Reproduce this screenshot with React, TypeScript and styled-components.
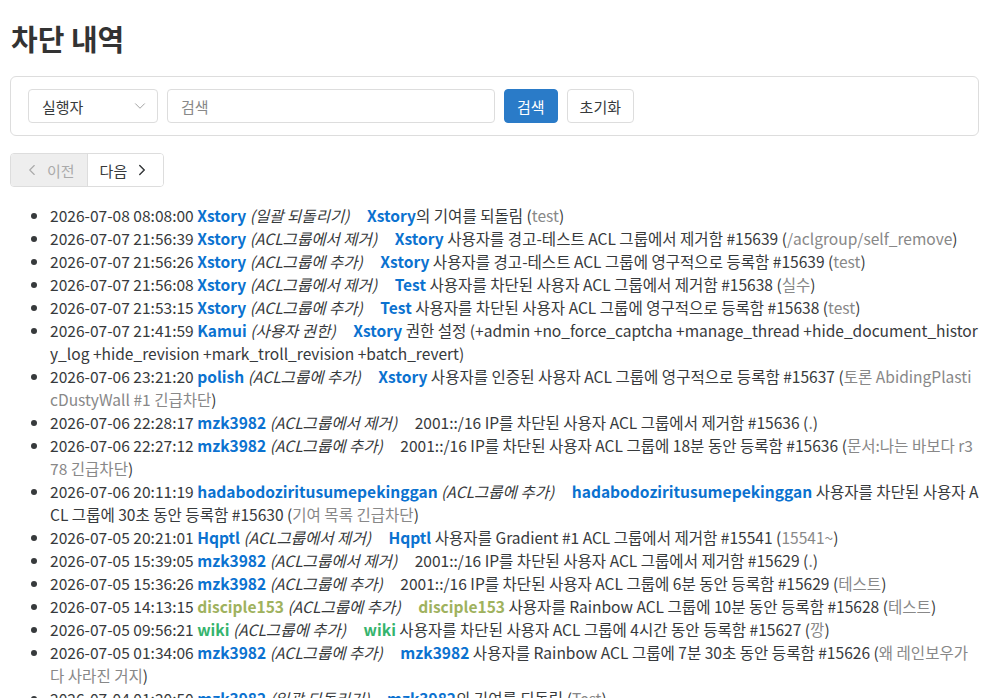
import React from "react";
import styled, { createGlobalStyle } from "styled-components";
import { ChevronDown, ChevronLeft, ChevronRight } from "lucide-react";

const GlobalStyle = createGlobalStyle`
  body {
    margin: 0;
    background: #fff;
    color: #373a3c;
    font-family: "Noto Sans CJK KR", "Noto Sans", sans-serif;
  }
`;

const Page = styled.div`
  padding: 16px 21px 0 10px;
`;

const Title = styled.h1`
  margin: 0 0 0 1px;
  font-size: 29px;
  font-weight: 700;
  line-height: 44px;
  color: #333;
`;

const SearchCard = styled.form`
  margin-top: 16px;
  border: 1px solid #ddd;
  border-radius: 6px;
  padding: 12px 17px;
  display: flex;
  align-items: center;
  gap: 9px;
`;

const SelectBox = styled.div`
  width: 130px;
  height: 34px;
  box-sizing: border-box;
  border: 1px solid #ddd;
  border-radius: 4px;
  display: flex;
  align-items: center;
  justify-content: space-between;
  padding: 0 8px 0 13px;
  font-size: 15px;
  color: #373a3c;
`;

const SearchInput = styled.div`
  width: 328px;
  height: 34px;
  box-sizing: border-box;
  border: 1px solid #ddd;
  border-radius: 4px;
  display: flex;
  align-items: center;
  padding: 0 13px;
  font-size: 15px;
  color: #888;
`;

const Button = styled.button<{ primary?: boolean }>`
  height: 34px;
  padding: 0 12px;
  border-radius: 4px;
  font-family: inherit;
  font-size: 15px;
  border: 1px solid ${({ primary }) => (primary ? "#2a7bc8" : "#ddd")};
  background: ${({ primary }) => (primary ? "#2a7bc8" : "#fff")};
  color: ${({ primary }) => (primary ? "#fff" : "#373a3c")};
`;

const Pager = styled.div`
  margin-top: 17px;
  display: inline-flex;
  border: 1px solid #ddd;
  border-radius: 4px;
  overflow: hidden;
`;

const PageLink = styled.span<{ disabled?: boolean }>`
  height: 32px;
  display: flex;
  align-items: center;
  gap: 6px;
  padding: 0 12px;
  font-size: 15px;
  background: ${({ disabled }) => (disabled ? "#eee" : "#fff")};
  color: ${({ disabled }) => (disabled ? "#aaa" : "#373a3c")};
  & + & {
    border-left: 1px solid #ddd;
  }
`;

const LogList = styled.ul`
  margin: 17px 0 0;
  padding-left: 40px;
  font-size: 15.55px;
  line-height: 23px;
  word-break: break-all;
`;

const UserLink = styled.a<{ tone?: string }>`
  font-weight: 700;
  text-decoration: none;
  color: ${({ tone }) =>
    tone === "olive" ? "#9fb25e" : tone === "green" ? "#35b46d" : "#0b72d0"};
`;

const Kind = styled.i`
  margin-right: 14px;
`;

const Reason = styled.span`
  color: #888;
`;

type User = { name: string; tone?: string };

type LogItem = {
  date: string;
  actor: User;
  kind: string;
  target?: User;
  text: string;
  reason: string;
};

const xstory: User = { name: "Xstory" };
const mzk: User = { name: "mzk3982" };

const logs: LogItem[] = [
  { date: "2026-07-08 08:08:00", actor: xstory, kind: "일괄 되돌리기", target: xstory, text: "의 기여를 되돌림", reason: "test" },
  { date: "2026-07-07 21:56:39", actor: xstory, kind: "ACL그룹에서 제거", target: xstory, text: " 사용자를 경고-테스트 ACL 그룹에서 제거함 #15639", reason: "/aclgroup/self_remove" },
  { date: "2026-07-07 21:56:26", actor: xstory, kind: "ACL그룹에 추가", target: xstory, text: " 사용자를 경고-테스트 ACL 그룹에 영구적으로 등록함 #15639", reason: "test" },
  { date: "2026-07-07 21:56:08", actor: xstory, kind: "ACL그룹에서 제거", target: { name: "Test" }, text: " 사용자를 차단된 사용자 ACL 그룹에서 제거함 #15638", reason: "실수" },
  { date: "2026-07-07 21:53:15", actor: xstory, kind: "ACL그룹에 추가", target: { name: "Test" }, text: " 사용자를 차단된 사용자 ACL 그룹에 영구적으로 등록함 #15638", reason: "test" },
  { date: "2026-07-07 21:41:59", actor: { name: "Kamui" }, kind: "사용자 권한", target: xstory, text: " 권한 설정 (+admin +no_force_captcha +manage_thread +hide_document_history_log +hide_revision +mark_troll_revision +batch_revert)", reason: "" },
  { date: "2026-07-06 23:21:20", actor: { name: "polish" }, kind: "ACL그룹에 추가", target: xstory, text: " 사용자를 인증된 사용자 ACL 그룹에 영구적으로 등록함 #15637", reason: "토론 AbidingPlasticDustyWall #1 긴급차단" },
  { date: "2026-07-06 22:28:17", actor: mzk, kind: "ACL그룹에서 제거", text: "2001::/16 IP를 차단된 사용자 ACL 그룹에서 제거함 #15636", reason: "." },
  { date: "2026-07-06 22:27:12", actor: mzk, kind: "ACL그룹에 추가", text: "2001::/16 IP를 차단된 사용자 ACL 그룹에 18분 동안 등록함 #15636", reason: "문서:나는 바보다 r378 긴급차단" },
  { date: "2026-07-06 20:11:19", actor: { name: "hadabodoziritusumepekinggan" }, kind: "ACL그룹에 추가", target: { name: "hadabodoziritusumepekinggan" }, text: " 사용자를 차단된 사용자 ACL 그룹에 30초 동안 등록함 #15630", reason: "기여 목록 긴급차단" },
  { date: "2026-07-05 20:21:01", actor: { name: "Hqptl" }, kind: "ACL그룹에서 제거", target: { name: "Hqptl" }, text: " 사용자를 Gradient #1 ACL 그룹에서 제거함 #15541", reason: "15541~" },
  { date: "2026-07-05 15:39:05", actor: mzk, kind: "ACL그룹에서 제거", text: "2001::/16 IP를 차단된 사용자 ACL 그룹에서 제거함 #15629", reason: "." },
  { date: "2026-07-05 15:36:26", actor: mzk, kind: "ACL그룹에 추가", text: "2001::/16 IP를 차단된 사용자 ACL 그룹에 6분 동안 등록함 #15629", reason: "테스트" },
  { date: "2026-07-05 14:13:15", actor: { name: "disciple153", tone: "olive" }, kind: "ACL그룹에 추가", target: { name: "disciple153", tone: "olive" }, text: " 사용자를 Rainbow ACL 그룹에 10분 동안 등록함 #15628", reason: "테스트" },
  { date: "2026-07-05 09:56:21", actor: { name: "wiki", tone: "green" }, kind: "ACL그룹에 추가", target: { name: "wiki", tone: "green" }, text: " 사용자를 차단된 사용자 ACL 그룹에 4시간 동안 등록함 #15627", reason: "깡" },
  { date: "2026-07-05 01:34:06", actor: mzk, kind: "ACL그룹에 추가", target: mzk, text: " 사용자를 Rainbow ACL 그룹에 7분 30초 동안 등록함 #15626", reason: "왜 레인보우가 다 사라진 거지" },
  { date: "2026-07-04 01:20:50", actor: mzk, kind: "일괄 되돌리기", target: mzk, text: "의 기여를 되돌림", reason: "Test" },
];

export default function App() {
  return (
    <>
      <GlobalStyle />
      <Page>
        <Title>차단 내역</Title>
        <SearchCard>
          <SelectBox>
            실행자
            <ChevronDown size={18} strokeWidth={1.2} color="#999" />
          </SelectBox>
          <SearchInput>검색</SearchInput>
          <Button primary type="button">
            검색
          </Button>
          <Button type="button">초기화</Button>
        </SearchCard>
        <Pager>
          <PageLink disabled>
            <ChevronLeft size={18} strokeWidth={1.5} />
            이전
          </PageLink>
          <PageLink>
            다음
            <ChevronRight size={18} strokeWidth={2} />
          </PageLink>
        </Pager>
        <LogList>
          {logs.map((log) => (
            <li key={log.date}>
              {log.date} <UserLink tone={log.actor.tone}>{log.actor.name}</UserLink>{" "}
              <Kind>({log.kind})</Kind>{" "}
              {log.target && (
                <UserLink tone={log.target.tone}>{log.target.name}</UserLink>
              )}
              {log.text}
              {log.reason && (
                <>
                  {" "}(<Reason>{log.reason}</Reason>)
                </>
              )}
            </li>
          ))}
        </LogList>
      </Page>
    </>
  );
}
